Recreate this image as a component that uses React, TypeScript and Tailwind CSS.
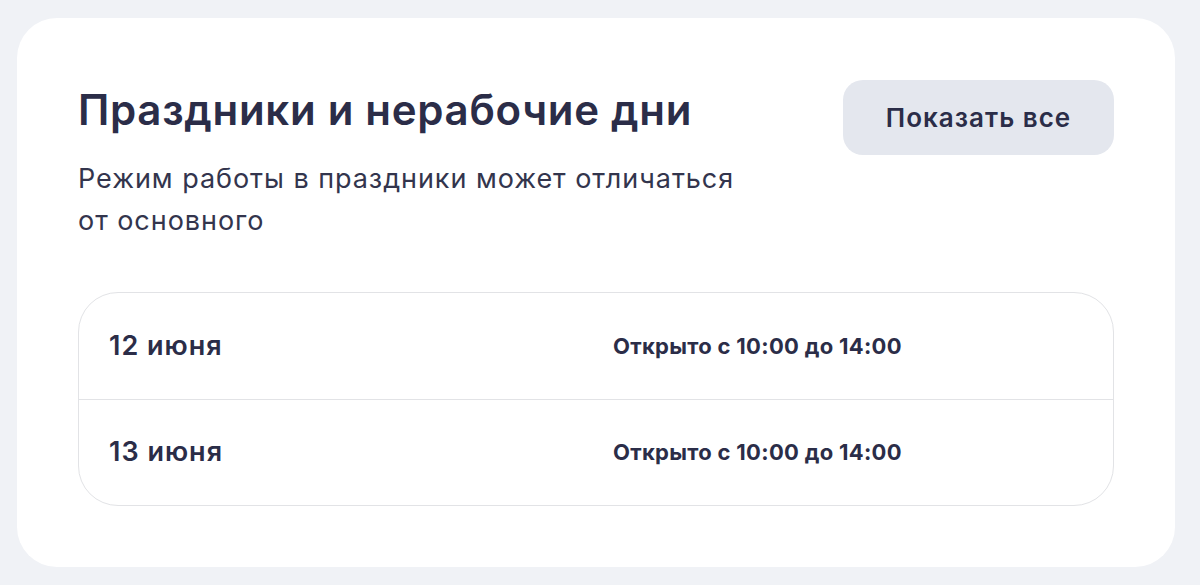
const days = [
  { date: "12 июня", hours: "Открыто с 10:00 до 14:00" },
  { date: "13 июня", hours: "Открыто с 10:00 до 14:00" },
];

export default function App() {
  return (
    <div className="min-h-[585px] bg-[#f0f2f6] pl-[17px] pr-[25px] pt-[18px] pb-[17px] font-['Inter',sans-serif] text-[#2b2d48]">
      <section className="rounded-[40px] bg-white px-[61px] pt-[62px] pb-[61px]">
        <div className="flex items-start justify-between">
          <div>
            <h2 className="mt-[6px] text-[42px] font-semibold leading-[48px] tracking-[0.7px]">
              Праздники и нерабочие дни
            </h2>
            <p className="mt-[24px] w-[700px] text-[27px] leading-[42px] tracking-[0.95px] text-[#33354d]">
              Режим работы в праздники может отличаться <br />
              от основного
            </p>
          </div>
          <button
            type="button"
            className="h-[75px] w-[271px] rounded-[20px] bg-[#e4e7ee] text-[26px] font-semibold tracking-[1px]"
          >
            Показать все
          </button>
        </div>

        <div className="mt-[50px] rounded-[40px] border border-[#e2e3e6]">
          {days.map((day, i) => (
            <div
              key={day.date}
              className={`flex h-[106px] items-center px-[30px] ${
                i > 0 ? "border-t border-[#e2e3e6]" : ""
              }`}
            >
              <span className="w-[504px] text-[27px] font-semibold tracking-[1px]">{day.date}</span>
              <span className="text-[22px] font-bold tracking-[0.3px]">{day.hours}</span>
            </div>
          ))}
        </div>
      </section>
    </div>
  );
}
